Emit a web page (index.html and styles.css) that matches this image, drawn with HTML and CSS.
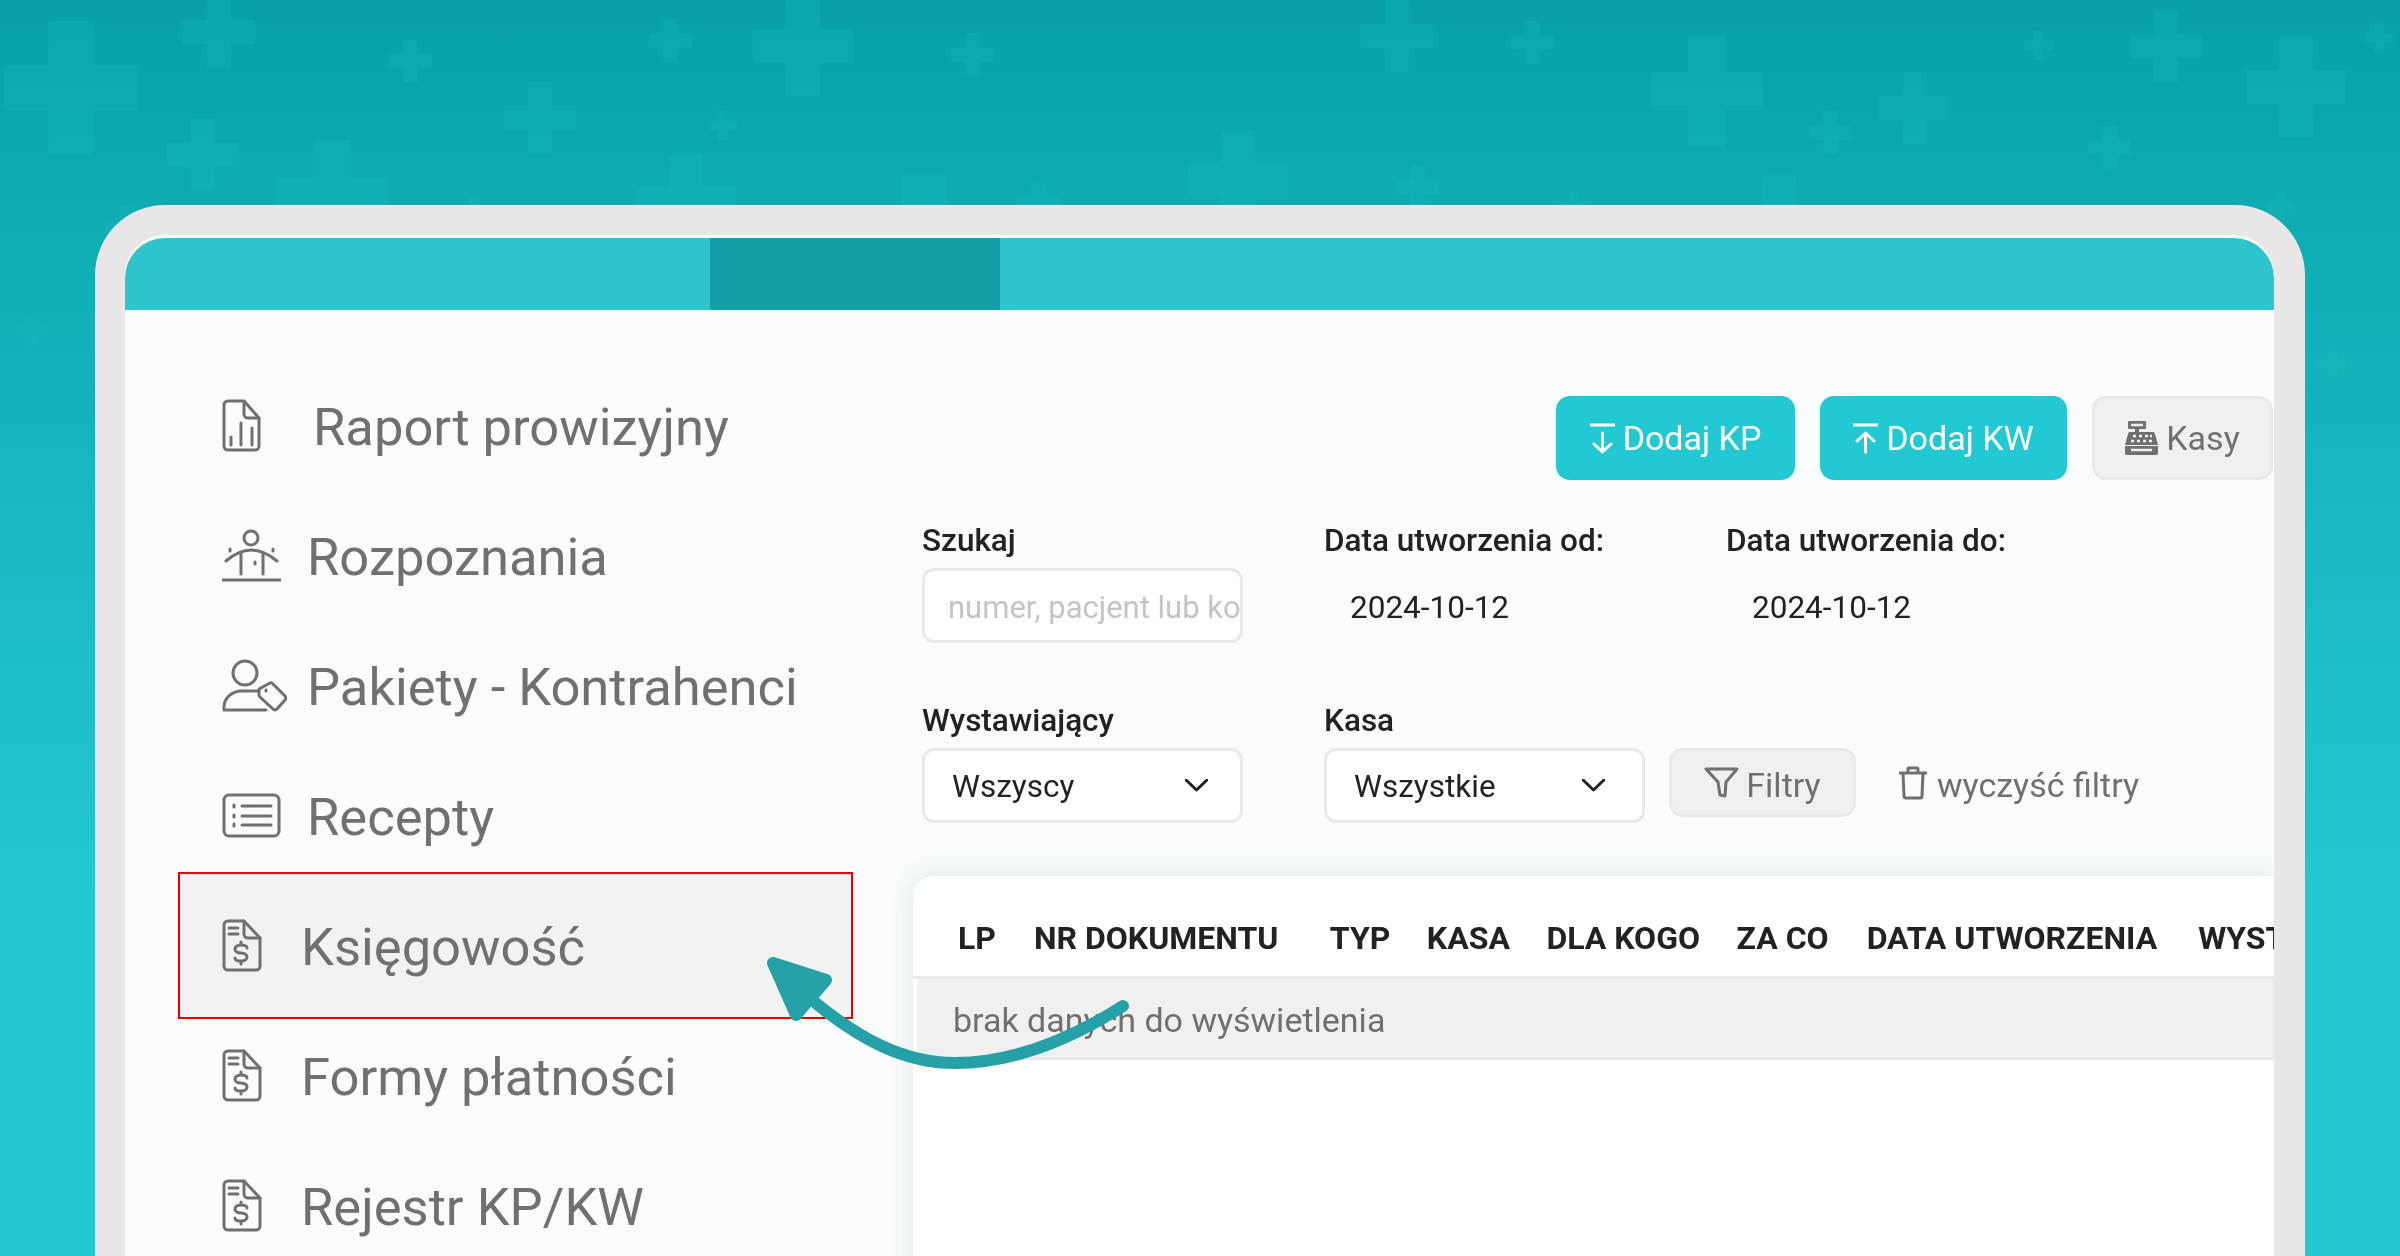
FILE: index.html
```html
<!DOCTYPE html>
<html lang="pl">
<head>
    <meta charset="UTF-8">
    <title>Księgowość</title>
    <link rel="stylesheet" href="styles.css">
</head>
<body>
    <!-- background pluses -->
    <svg class="pluses" width="2400" height="1256" viewBox="0 0 2400 1256">
        <defs>
            <symbol id="plus" viewBox="0 0 100 100"><path d="M33 0h34v33h33v34H67v33H33V67H0V33h33z"/></symbol>
        </defs>
        <g fill="#20c0c8" opacity=".2">
            <use href="#plus" x="4" y="21" width="134" height="134"/>
            <use href="#plus" x="183" y="-4" width="72" height="72"/>
            <use href="#plus" x="389" y="39" width="43" height="43"/>
            <use href="#plus" x="649" y="19" width="43" height="43"/>
            <use href="#plus" x="753" y="-4" width="100" height="100"/>
            <use href="#plus" x="951" y="33" width="43" height="43"/>
            <use href="#plus" x="504" y="82" width="72" height="72"/>
            <use href="#plus" x="708" y="111" width="29" height="29"/>
            <use href="#plus" x="167" y="119" width="72" height="72"/>
            <use href="#plus" x="276" y="140" width="112" height="112"/>
            <use href="#plus" x="636" y="154" width="100" height="100"/>
            <use href="#plus" x="857" y="175" width="134" height="134"/>
            <use href="#plus" x="1017" y="183" width="43" height="43"/>
            <use href="#plus" x="460" y="197" width="29" height="29"/>
            <use href="#plus" x="1188" y="130" width="100" height="100"/>
            <use href="#plus" x="105" y="206" width="43" height="43"/>
            <use href="#plus" x="15" y="316" width="29" height="29"/>
            <use href="#plus" x="1361" y="0" width="72" height="72"/>
            <use href="#plus" x="1511" y="21" width="43" height="43"/>
            <use href="#plus" x="1651" y="35" width="112" height="112"/>
            <use href="#plus" x="1879" y="72" width="72" height="72"/>
            <use href="#plus" x="1809" y="111" width="43" height="43"/>
            <use href="#plus" x="2024" y="31" width="29" height="29"/>
            <use href="#plus" x="2130" y="10" width="72" height="72"/>
            <use href="#plus" x="2246" y="37" width="100" height="100"/>
            <use href="#plus" x="2365" y="23" width="29" height="29"/>
            <use href="#plus" x="2088" y="126" width="43" height="43"/>
            <use href="#plus" x="1396" y="165" width="43" height="43"/>
            <use href="#plus" x="1559" y="192" width="29" height="29"/>
            <use href="#plus" x="1729" y="175" width="100" height="100"/>
            <use href="#plus" x="2266" y="192" width="29" height="29"/>
            <use href="#plus" x="2318" y="350" width="29" height="29"/>
        </g>
    </svg>

    <div class="frame">
        <div class="screen">
            <div class="topbar"><div class="topbar-tab"></div></div>

            <div class="content">
                <nav class="sidebar">
                    <a class="nav-item">
                        <svg class="nav-icon gap-doc" width="39" height="53" viewBox="0 0 39 53">
                            <path d="M6 2h16l15 17v28a4 4 0 0 1-4 4H6a4 4 0 0 1-4-4V6a4 4 0 0 1 4-4z"/>
                            <path d="M22 2v13a4 4 0 0 0 4 4h11M9 38v8M19 24v22M30 29v17"/>
                        </svg>
                        <span>Raport prowizyjny</span>
                    </a>
                    <a class="nav-item">
                        <svg class="nav-icon gap-wide" width="59" height="53" viewBox="0 0 59 53">
                            <circle cx="29" cy="9" r="7"/>
                            <path d="M4 32Q29 10 55 32M19 25v20M41 25v20M0 51h59"/>
                            <path class="dot" d="M8 20v2M51 20v2M33 33v2"/>
                        </svg>
                        <span>Rozpoznania</span>
                    </a>
                    <a class="nav-item">
                        <svg class="nav-icon gap-tag" width="65" height="53" viewBox="0 0 65 53">
                            <ellipse cx="23" cy="14" rx="12" ry="12"/>
                            <path d="M2 50v-2c0-9 8-16 18-16h15M2 51h42"/>
                            <path d="M37 30l11-6a2 2 0 0 1 2 0l13 13a3 3 0 0 1 0 4l-8 9a3 3 0 0 1-4 0L38 38a3 3 0 0 1-1-2z"/>
                            <path class="dot" d="M44 31v1"/>
                        </svg>
                        <span>Pakiety - Kontrahenci</span>
                    </a>
                    <a class="nav-item">
                        <svg class="nav-icon gap-wide" width="59" height="45" viewBox="0 0 59 45">
                            <rect x="2" y="2" width="55" height="41" rx="5"/>
                            <path d="M20 13h29M20 23h29M20 32h29"/>
                            <path class="dot" d="M12 12v2M12 22v2M12 31v2"/>
                        </svg>
                        <span>Recepty</span>
                    </a>
                    <a class="nav-item nav-item-active">
                        <svg class="nav-icon gap-bill" width="40" height="53" viewBox="0 0 40 53">
                            <use href="#bill"/>
                        </svg>
                        <span>Księgowość</span>
                    </a>
                    <a class="nav-item">
                        <svg class="nav-icon gap-bill" width="40" height="53" viewBox="0 0 40 53">
                            <use href="#bill"/>
                        </svg>
                        <span>Formy płatności</span>
                    </a>
                    <a class="nav-item">
                        <svg class="nav-icon gap-bill" width="40" height="53" viewBox="0 0 40 53">
                            <use href="#bill"/>
                        </svg>
                        <span>Rejestr KP/KW</span>
                    </a>
                </nav>

                <main class="main">
                    <div class="toolbar">
                        <button class="btn btn-primary btn-kp">
                            <svg width="25" height="31" viewBox="0 0 25 31"><path d="M0 2h25M12.5 10v19M4 21l8.500 8 8.500-8"/></svg>
                            Dodaj KP
                        </button>
                        <button class="btn btn-primary btn-kw">
                            <svg width="25" height="31" viewBox="0 0 25 31"><path d="M0 2h25M12.500 29V10M4 18l8.500-8 8.500 8"/></svg>
                            Dodaj KW
                        </button>
                        <button class="btn btn-grey btn-kasy">
                            <svg class="fill-icon" width="33" height="34" viewBox="0 0 33 34">
                                <rect x="3" y="0" width="18" height="8" rx="1"/>
                                <rect x="10" y="8" width="4" height="4"/>
                                <path d="M5 11h23a2 2 0 0 1 2 2l3 11H0l3-11a2 2 0 0 1 2-2z"/>
                                <path d="M0 25h33v7a2 2 0 0 1-2 2H2a2 2 0 0 1-2-2z"/>
                                <path class="holes" d="M8 15h3M14 15h3M20 15h3M25 15h2M6 20h3M12 20h3M18 20h3M24 20h3M6 29h21M6 4h12"/>
                            </svg>
                            Kasy
                        </button>
                    </div>

                    <div class="filters">
                        <div class="field">
                            <label>Szukaj</label>
                            <input class="input search" placeholder="numer, pacjent lub kontrahent">
                        </div>
                        <div class="field">
                            <label>Data utworzenia od:</label>
                            <div class="date">2024-10-12</div>
                        </div>
                        <div class="field">
                            <label>Data utworzenia do:</label>
                            <div class="date">2024-10-12</div>
                        </div>
                        <div class="field">
                            <label>Wystawiający</label>
                            <div class="input select">
                                <span>Wszyscy</span>
                                <svg width="23" height="13" viewBox="0 0 23 13"><path d="M1 1l10.500 10L22 1"/></svg>
                            </div>
                        </div>
                        <div class="field">
                            <label>Kasa</label>
                            <div class="input select select-kasa">
                                <span>Wszystkie</span>
                                <svg width="23" height="13" viewBox="0 0 23 13"><path d="M1 1l10.500 10L22 1"/></svg>
                            </div>
                        </div>
                        <div class="filter-actions">
                            <button class="btn btn-grey btn-filter">
                                <svg width="35" height="31" viewBox="0 0 35 31"><path d="M2 2h31L22 15l-1 14-5-1-2-13z"/></svg>
                                <span class="btn-label">Filtry</span>
                            </button>
                            <button class="btn-clear">
                                <svg width="28" height="34" viewBox="0 0 28 34"><path d="M1 7h26M9 6V3a1 1 0 0 1 1-1h8a1 1 0 0 1 1 1v3M4 7l1 23a2 2 0 0 0 2 2h14a2 2 0 0 0 2-2l1-23"/></svg>
                                <span class="btn-label">wyczyść filtry</span>
                            </button>
                        </div>
                    </div>

                    <section class="card">
                        <div class="table-head">
                            <span class="col-lp">LP</span>
                            <span class="col-number">NR DOKUMENTU</span>
                            <span>TYP</span>
                            <span>KASA</span>
                            <span>DLA KOGO</span>
                            <span>ZA CO</span>
                            <span class="col-date">DATA UTWORZENIA</span>
                            <span class="col-issuer">WYSTAWIAJĄCY</span>
                        </div>
                        <div class="table-empty">brak danych do wyświetlenia</div>
                    </section>
                </main>
            </div>
        </div>
    </div>

    <!-- shared bill icon -->
    <svg class="defs-only" width="0" height="0">
        <defs>
            <g id="bill">
                <path d="M6 2h16l16 17v28a4 4 0 0 1-4 4H6a4 4 0 0 1-4-4V6a4 4 0 0 1 4-4z"/>
                <path d="M22 2v13a4 4 0 0 0 4 4h12M7 9h9M7 15h9"/>
                <path d="M25 29c0-2-2-3-6-3s-6 2-6 4 2 4 6 4 6 2 6 4-2 4-6 4-6-1-6-3M19 23v3M19 42v3"/>
            </g>
        </defs>
    </svg>

    <!-- arrow pointing at the menu item -->
    <svg class="pointer" width="2400" height="1256" viewBox="0 0 2400 1256">
        <path class="pointer-line" d="M1123 1006C1060 1046 1005 1063 955 1063C905 1063 860 1040 812 1000"/>
        <path class="pointer-head" d="M773 963L826 980L796 1015z"/>
    </svg>
</body>
</html>
```

FILE: styles.css
```css
* {
    box-sizing: border-box;
}
body {
    margin: 0;
    width: 2400px;
    height: 1256px;
    padding: 205px 95px 0;
    overflow: hidden;
    position: relative;
    font-family: Roboto, "Liberation Sans", sans-serif;
    background: linear-gradient(180deg, #07a0a8 0, #0eabb1 16%, #1abac5 44%, #22c9d2 72%);
}
.pluses,
.pointer {
    position: absolute;
    left: 0;
    top: 0;
}
.pointer {
    pointer-events: none;
}
.pointer-line {
    fill: none;
    stroke: #25a0a6;
    stroke-width: 12;
    stroke-linecap: round;
}
.pointer-head {
    fill: #25a0a6;
    stroke: #25a0a6;
    stroke-width: 12;
    stroke-linejoin: round;
}
.defs-only {
    position: absolute;
}

.frame {
    position: relative;
    width: 2210px;
    height: 1100px;
    border: solid #e8e6e7;
    border-width: 30px 31px 0 30px;
    border-radius: 70px 70px 0 0;
    background: #e8e6e7;
}
.screen {
    height: 100%;
    padding-top: 3px;
    background: #fff;
    border-radius: 40px 40px 0 0;
    overflow: hidden;
}
.topbar {
    height: 72px;
    padding-left: 585px;
    background: #2ec4cd;
    border-radius: 40px 40px 0 0;
}
.topbar-tab {
    width: 290px;
    height: 100%;
    background: #149fa8;
}
.content {
    display: flex;
    height: 100%;
    background: #f8fcfd;
}

/* sidebar */
.sidebar {
    width: 675px;
    margin: 50px 0 0 53px;
    flex-shrink: 0;
}
.nav-item {
    display: flex;
    align-items: center;
    height: 130px;
    padding-left: 44px;
    font-size: 52.5px;
    color: #707070;
}
.nav-item span {
    padding-top: 3px;
}
.nav-item-active {
    height: 147px;
    margin: -8px 0 -9px;
    background: #f2f2f2;
    border: 2px solid #e60000;
    padding-left: 42px;
}
.nav-icon {
    flex-shrink: 0;
    fill: none;
    stroke: #707070;
    stroke-width: 3;
    stroke-linecap: round;
    stroke-linejoin: round;
}
.dot {
    stroke-width: 3;
}
.gap-doc { margin-right: 52px; }
.gap-wide { margin-right: 26px; }
.gap-tag { margin-right: 20px; }
.gap-bill { margin-right: 39px; }

/* main column */
.main {
    flex: 1;
    min-width: 0;
    margin-left: 60px;
    padding-top: 86px;
}
.toolbar {
    display: flex;
    justify-content: flex-end;
    gap: 25px;
    height: 84px;
}
.btn {
    display: flex;
    align-items: center;
    justify-content: center;
    gap: 8px;
    font-family: inherit;
    font-size: 34px;
    border-radius: 14px;
    border: none;
    padding: 0;
}
.btn svg {
    fill: none;
    stroke: currentColor;
    stroke-width: 3;
    stroke-linecap: round;
    stroke-linejoin: round;
}
.btn-primary {
    background: #22c9d2;
    color: #fff;
}
.btn-kp { width: 239px; }
.btn-kw { width: 247px; }
.btn-grey {
    background: #f0f0f0;
    color: #707070;
    border: 3px solid #e9e8ec;
}
.btn-kasy { width: 181px; margin-right: 1px; }
.btn svg.fill-icon {
    fill: #707070;
    stroke: none;
}
.btn svg .holes {
    fill: none;
    stroke: #f0f0f0;
    stroke-width: 2.5;
    stroke-linecap: butt;
}
.btn-label {
    padding-top: 4px;
}

.filters {
    display: grid;
    grid-template-columns: 321px 321px 1fr;
    column-gap: 81px;
    row-gap: 57px;
    margin: 40px 0 53px 9px;
}
.field label {
    display: block;
    height: 40px;
    margin-bottom: 8px;
    line-height: 41px;
    font-size: 31.5px;
    font-weight: 500;
    color: #222;
}
.input {
    display: flex;
    align-items: center;
    width: 100%;
    height: 75px;
    background: #fff;
    border: 3px solid #e9e8ec;
    border-radius: 12px;
    font-family: inherit;
    font-size: 31.5px;
    color: #222;
    white-space: nowrap;
    overflow: hidden;
}
.search {
    padding: 3px 0 0 23px;
    font-size: 31px;
    outline: none;
}
.search::placeholder {
    color: #c4c4c4;
    opacity: 1;
}
.select {
    justify-content: space-between;
    padding: 2px 32px 0 27px;
}
.select svg {
    margin-top: -2px;
    fill: none;
    stroke: #222;
    stroke-width: 3;
    stroke-linecap: round;
    stroke-linejoin: round;
}
.select-kasa {
    padding-right: 37px;
}
.date {
    display: flex;
    align-items: center;
    height: 75px;
    padding: 3px 0 0 26px;
    font-size: 31.5px;
    color: #222;
}
.filter-actions {
    display: flex;
    align-items: center;
    margin: 48px 0 6px -57px;
}
.btn-filter {
    width: 187px;
    height: 69px;
    gap: 7px;
    padding-right: 0;
}
.btn-clear {
    display: flex;
    align-items: center;
    gap: 10px;
    margin-left: 43px;
    padding: 0;
    border: none;
    background: none;
    font-family: inherit;
    font-size: 34px;
    color: #707070;
}
.btn-clear svg {
    fill: none;
    stroke: #707070;
    stroke-width: 3;
    stroke-linecap: round;
    stroke-linejoin: round;
}

/* table card */
.card {
    height: 600px;
    background: #fff;
    border-radius: 20px 0 0 0;
    box-shadow: 0 0 24px rgba(40, 60, 70, .13);
    overflow: hidden;
}
.table-head {
    display: flex;
    gap: 36.5px;
    height: 103px;
    padding: 42px 0 0 45px;
    border-bottom: 3px solid #e9e8ec;
    font-size: 32px;
    line-height: 40px;
    font-weight: 700;
    color: #222;
    white-space: nowrap;
}
.col-lp {
    margin-right: 1.5px;
}
.col-number {
    margin-right: 15px;
}
.col-date {
    margin-left: 1.5px;
}
.col-issuer {
    margin-left: 4.5px;
}
.table-empty {
    height: 81px;
    margin-left: 4px;
    padding: 2px 0 0 36px;
    line-height: 78px;
    background: #f0f0f0;
    border-bottom: 3px solid #e9e8ec;
    font-size: 34px;
    color: #707070;
}
```
